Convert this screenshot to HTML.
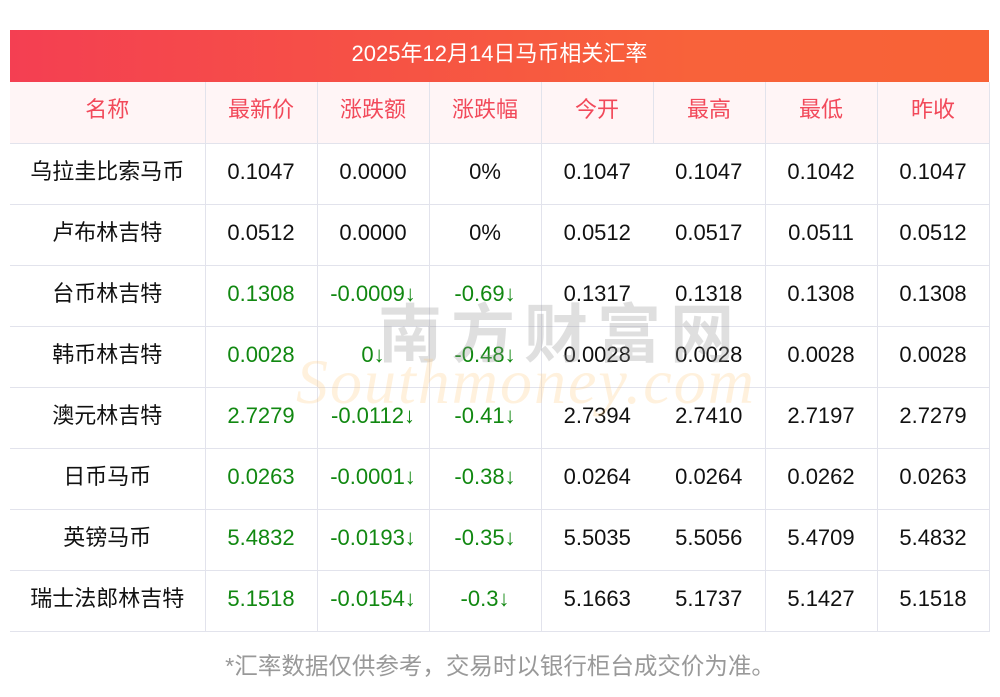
<!DOCTYPE html>
<html><head><meta charset="utf-8"><style>
body{margin:0;background:#fff;width:1000px;height:697px;position:relative;overflow:hidden;font-family:"Liberation Sans","Noto Sans CJK SC",sans-serif;}
.bar{position:absolute;left:10px;top:30px;width:979px;height:52px;background:linear-gradient(90deg,#f43f52,#f8623a 70%,#f86236);color:#fff;font-size:22px;line-height:48px;text-align:center;}
table{position:absolute;left:10px;top:82px;width:979px;border-collapse:collapse;table-layout:fixed;}
td{height:61px;border-bottom:1px solid #e2e3ec;border-right:1px solid #e2e3ec;text-align:center;font-size:22px;line-height:22px;color:#111;padding:0 0 3px 0;box-sizing:border-box;}
tr.h td{background:#fff5f6;color:#f2495a;padding-bottom:4px;}
td.nr{border-right:none;}
.g{color:#118811;}
.wm1{position:absolute;left:378px;top:284px;font-size:64px;color:rgba(150,150,150,0.3);letter-spacing:9px;font-weight:bold;}
.wm2{position:absolute;left:296px;top:345px;font-size:64px;color:rgba(255,200,120,0.25);font-style:italic;font-family:"Liberation Serif",serif;letter-spacing:2px;}
.foot{position:absolute;left:0;width:1000px;top:647px;text-align:center;font-size:23.5px;color:#999;}
</style></head><body>
<div class="bar">2025年12月14日马币相关汇率</div>
<table>
<colgroup><col style="width:195px"><col style="width:112px"><col style="width:112px"><col style="width:112px"><col style="width:112px"><col style="width:112px"><col style="width:112px"><col style="width:112px"></colgroup>
<tr class="h"><td>名称</td><td>最新价</td><td>涨跌额</td><td>涨跌幅</td><td>今开</td><td>最高</td><td>最低</td><td>昨收</td></tr>
<tr><td>乌拉圭比索马币</td><td>0.1047</td><td>0.0000</td><td>0%</td><td class="nr">0.1047</td><td>0.1047</td><td>0.1042</td><td>0.1047</td></tr>
<tr><td>卢布林吉特</td><td>0.0512</td><td>0.0000</td><td>0%</td><td class="nr">0.0512</td><td>0.0517</td><td>0.0511</td><td>0.0512</td></tr>
<tr><td>台币林吉特</td><td class="g">0.1308</td><td class="g">-0.0009↓</td><td class="g">-0.69↓</td><td class="nr">0.1317</td><td>0.1318</td><td>0.1308</td><td>0.1308</td></tr>
<tr><td>韩币林吉特</td><td class="g">0.0028</td><td class="g">0↓</td><td class="g">-0.48↓</td><td class="nr">0.0028</td><td>0.0028</td><td>0.0028</td><td>0.0028</td></tr>
<tr><td>澳元林吉特</td><td class="g">2.7279</td><td class="g">-0.0112↓</td><td class="g">-0.41↓</td><td class="nr">2.7394</td><td>2.7410</td><td>2.7197</td><td>2.7279</td></tr>
<tr><td>日币马币</td><td class="g">0.0263</td><td class="g">-0.0001↓</td><td class="g">-0.38↓</td><td class="nr">0.0264</td><td>0.0264</td><td>0.0262</td><td>0.0263</td></tr>
<tr><td>英镑马币</td><td class="g">5.4832</td><td class="g">-0.0193↓</td><td class="g">-0.35↓</td><td class="nr">5.5035</td><td>5.5056</td><td>5.4709</td><td>5.4832</td></tr>
<tr><td>瑞士法郎林吉特</td><td class="g">5.1518</td><td class="g">-0.0154↓</td><td class="g">-0.3↓</td><td class="nr">5.1663</td><td>5.1737</td><td>5.1427</td><td>5.1518</td></tr>
</table>
<div class="wm1">南方财富网</div>
<div class="wm2">Southmoney.com</div>
<div class="foot">*汇率数据仅供参考，交易时以银行柜台成交价为准。</div>
</body></html>
